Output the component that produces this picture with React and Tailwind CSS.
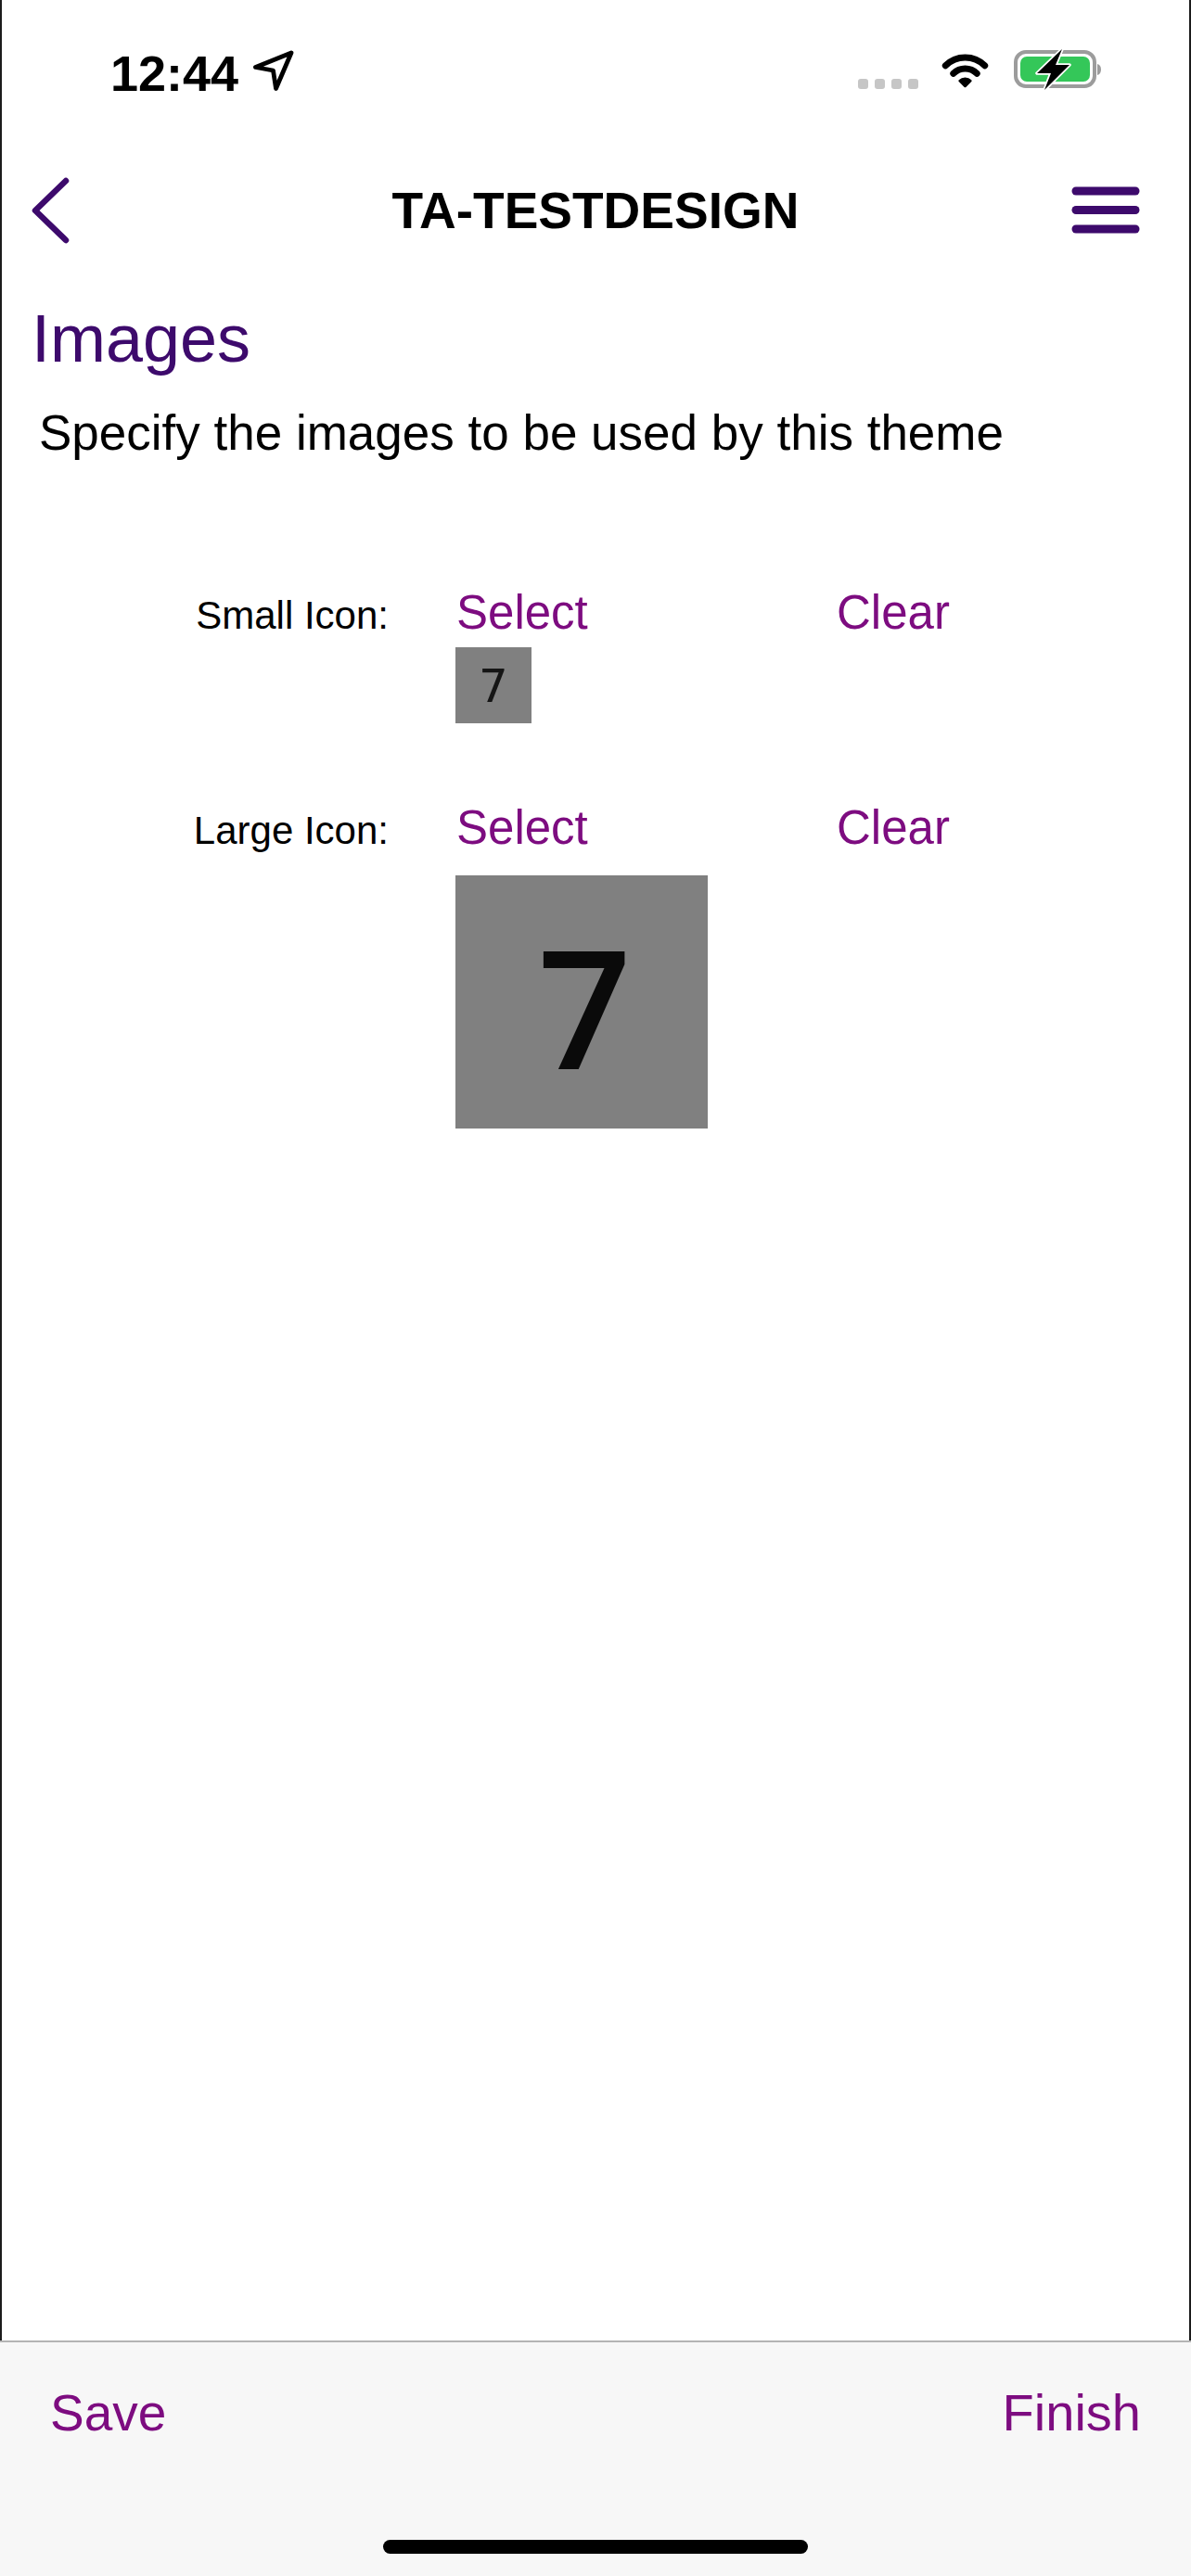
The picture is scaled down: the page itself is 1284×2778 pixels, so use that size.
// App.jsx
const font = { fontFamily: '"Liberation Sans", Arial, sans-serif' };

function LocationArrow() {
  return (
    <svg width="44" height="44" viewBox="0 0 44 44" className="ml-[16px]">
      <path
        d="M41 3 L2.5 18.5 L21.5 22 L24.5 41.5 Z"
        fill="none"
        stroke="#000"
        strokeWidth="4.8"
        strokeLinejoin="round"
      />
    </svg>
  );
}

function Wifi() {
  return (
    <svg width="55" height="40" viewBox="0 0 55 40" className="mb-[3px]">
      <path d="M6.3 15.8 A30 30 0 0 1 48.7 15.8" fill="none" stroke="#000" strokeWidth="7" strokeLinecap="round" />
      <path d="M14.8 24.3 A18 18 0 0 1 40.2 24.3" fill="none" stroke="#000" strokeWidth="7" strokeLinecap="round" />
      <path d="M27.5 38 L21.6 32.1 A8.3 8.3 0 0 1 33.4 32.1 Z" fill="#000" stroke="#000" strokeWidth="2.5" strokeLinejoin="round" />
    </svg>
  );
}

function Battery() {
  return (
    <svg width="96" height="46" viewBox="0 0 96 46">
      <rect x="3" y="4" width="85" height="37" rx="11" fill="none" stroke="#9c9c9c" strokeWidth="4" />
      <rect x="8" y="9" width="75" height="27" rx="7" fill="#34c759" />
      <path d="M91 17 Q95 18 95 23 Q95 28 91 29 Z" fill="#9c9c9c" />
      <path
        d="M53 1 L26 27 L41 27 L34 45 L61 18 L46 18 Z"
        fill="#000"
        stroke="#fff"
        strokeWidth="3.5"
        strokeLinejoin="round"
        paintOrder="stroke"
      />
    </svg>
  );
}

function IconRow({ label }) {
  return (
    <div className="flex items-baseline leading-none">
      <div className="w-[417px] text-right text-[42px] text-black">{label}</div>
      <button className="ml-[73px] w-[410px] text-left text-[51px] text-[#7d0c80]">Select</button>
      <button className="text-[51px] text-[#7d0c80]">Clear</button>
    </div>
  );
}

export default function App() {
  return (
    <div className="w-[1284px] h-[2778px] flex flex-col bg-white overflow-hidden" style={font}>
      <div className="flex-1 flex flex-col border-l-2 border-r-2 border-[#1c1c1c]">
        {/* status bar */}
        <div className="h-[153px] flex justify-between">
          <div className="flex items-baseline pl-[117px] pt-[52px] h-fit">
            <span className="text-[54px] font-bold leading-none text-black">12:44</span>
            <LocationArrow />
          </div>
          <div className="flex items-end pt-[52px] pr-[94px] h-fit">
            <div className="flex gap-[7px] mb-[2px]">
              {[0, 1, 2, 3].map((i) => (
                <div key={i} className="w-[11px] h-[11px] rounded-[3px] bg-[#c6c6c6]" />
              ))}
            </div>
            <div className="ml-[23px]">
              <Wifi />
            </div>
            <div className="ml-[24px]">
              <Battery />
            </div>
          </div>
        </div>

        {/* nav bar */}
        <div className="h-[148px] grid grid-cols-[1fr_auto_1fr] items-center">
          <button className="justify-self-start ml-[28px]">
            <svg width="46" height="72" viewBox="0 0 46 72" className="block">
              <polyline points="41,4 8,36 41,68" fill="none" stroke="#3d0a6c" strokeWidth="6.5" strokeLinecap="round" strokeLinejoin="round" />
            </svg>
          </button>
          <h1 className="text-[55px] font-bold leading-none text-black">TA-TESTDESIGN</h1>
          <button className="justify-self-end mr-[53px]">
            <svg width="74" height="52" viewBox="0 0 74 52" className="block">
              <line x1="5" y1="5" x2="69" y2="5" stroke="#3d0a6c" strokeWidth="9" strokeLinecap="round" />
              <line x1="5" y1="25.5" x2="69" y2="25.5" stroke="#3d0a6c" strokeWidth="9" strokeLinecap="round" />
              <line x1="5" y1="46" x2="69" y2="46" stroke="#3d0a6c" strokeWidth="9" strokeLinecap="round" />
            </svg>
          </button>
        </div>

        {/* content */}
        <h2 className="mt-[28px] ml-[32px] text-[72px] leading-none text-[#3d0a6c]">Images</h2>
        <p className="mt-[39px] ml-[40px] text-[53px] leading-none text-black">
          Specify the images to be used by this theme
        </p>

        <div className="mt-[142px]">
          <IconRow label="Small Icon:" />
        </div>
        <div
          className="ml-[489px] mt-[12px] w-[82px] h-[82px] bg-[#808080] flex items-center justify-center text-[50px] leading-none text-[#151515]"
          style={{ fontFamily: '"DejaVu Sans", sans-serif' }}
        >
          <span className="blur-[0.6px] mt-[2px]">7</span>
        </div>

        <div className="mt-[87px]">
          <IconRow label="Large Icon:" />
        </div>
        <div
          className="ml-[489px] mt-[26px] w-[272px] h-[273px] bg-[#808080] flex items-center justify-center text-[177px] font-bold leading-none text-[#0a0a0a]"
          style={{ fontFamily: '"Open Sans", "DejaVu Sans", sans-serif' }}
        >
          <span className="mt-[8px] ml-[6px] font-semibold">7</span>
        </div>
      </div>

      {/* bottom toolbar */}
      <div className="h-[254px] flex flex-col bg-[#f7f7f7] border-t-2 border-[#b4b4b4]">
        <div className="flex justify-between pt-[48px] pl-[54px] pr-[54px] leading-none">
          <button className="text-[55px] text-[#7d0c80]">Save</button>
          <button className="text-[56px] text-[#7d0c80]">Finish</button>
        </div>
        <div className="mt-auto mb-[24px] self-center w-[458px] h-[15px] rounded-full bg-black" />
      </div>
    </div>
  );
}
